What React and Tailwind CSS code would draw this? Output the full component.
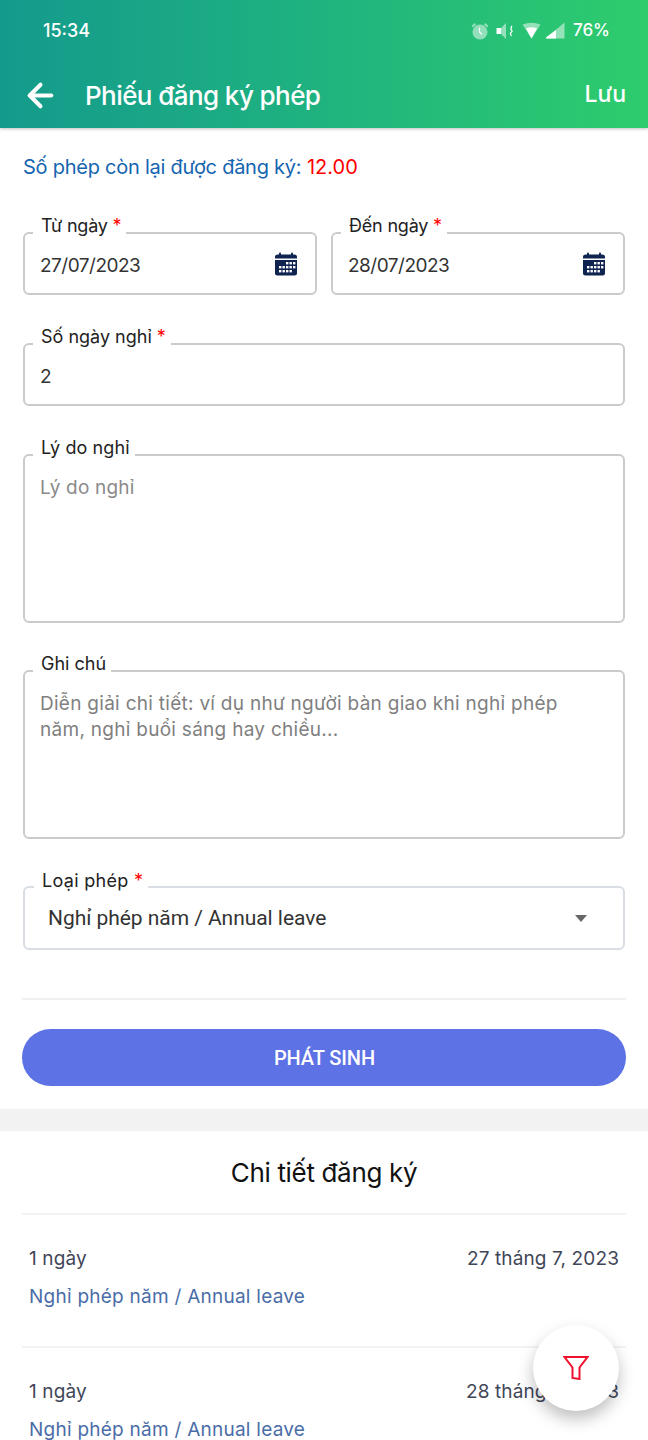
import { ArrowLeft } from "lucide-react";

const inter = "font-['Inter','Noto_Sans',sans-serif]";

function CalendarIcon() {
  return (
    <svg width="24" height="24" viewBox="0 0 24 24" className="mt-[1px] shrink-0">
      <rect x="5" y="0.5" width="2" height="4" rx="1" fill="#0f2350" />
      <rect x="17" y="0.5" width="2" height="4" rx="1" fill="#0f2350" />
      <path d="M3.5 2.5h17A2.5 2.5 0 0 1 23 5v1.5H1V5a2.5 2.5 0 0 1 2.5-2.5z" fill="#0f2350" />
      <path d="M1 8h22v13a2.500 2.500 0 0 1-2.500 2.500h-17A2.500 2.500 0 0 1 1 21z" fill="#0f2350" />
      {[[12, 10], [15.5, 10], [19, 10], [5, 14], [8.500, 14], [12, 14], [15.5, 14], [19, 14], [5, 18], [8.500, 18], [12, 18], [15.5, 18]].map(([x, y]) => (
        <rect key={`${x}-${y}`} x={x} y={y} width="2.400" height="2.400" fill="#fff" />
      ))}
    </svg>
  );
}

function StatusIcons() {
  return (
    <div className="flex items-center">
      <svg width="18" height="18" viewBox="0 0 18 18" fill="#fff" fillOpacity="0.5">
        <circle cx="9" cy="10" r="7.500" />
        <path d="M0.500 4 3.500 1l1.500 1.500-3 3zM17.500 4l-3-3-1.500 1.500 3 3z" />
        <path d="M8.500 5.500v4.500l2.500 2.500" fill="none" stroke="#fff" strokeOpacity="0.9" strokeWidth="1.200" />
      </svg>
      <svg width="18" height="18" viewBox="0 0 18 18" fill="#fff" className="ml-[7px]">
        <path d="M0.500 6h4.500v6H0.500z" />
        <path d="M5 6 10 1v16l-5-5z" fillOpacity="0.5" />
        <path d="M15 4c2 1 -1 2 0 3.500s2 1 0 3 1 2.500 0 3.500" fill="none" stroke="#fff" strokeWidth="1.300" />
      </svg>
      <svg width="19" height="17" viewBox="0 0 19 17" fill="#fff" className="ml-[8px]">
        <path d="M0.500 2.500Q9.500-1 18.500 2.500L9.500 16.500z" fillOpacity="0.5" />
        <path d="M4 6.500Q9.500 4 15 6.500L9.500 16.500z" />
      </svg>
      <svg width="20" height="17" viewBox="0 0 20 17" fill="#fff" className="ml-[4px]">
        <path d="M19.500 0.500V16.500H0.500z" fillOpacity="0.5" />
        <path d="M11 8v8.500H1.500q-1-.5 0-1.500z" />
      </svg>
      <span className={`${inter} ml-[8px] text-[17px] font-medium leading-none text-white`}>76%</span>
    </div>
  );
}

function Field({ label, required, children, className = "", labelClass = "left-[8px] top-[-21px]", borderClass = "border-[#cbcbcb]" }) {
  return (
    <div className={`relative rounded-[6px] border-2 ${borderClass} ${className}`}>
      <span className={`${inter} absolute ${labelClass} bg-white pl-[8px] pr-[5px] text-[18px] leading-[26px] text-[#222]`}>
        {label}
        {required && <span className="text-[#f00]"> *</span>}
      </span>
      {children}
    </div>
  );
}

function DetailRow({ date }) {
  return (
    <div className={`${inter} h-[133px] border-t-2 border-[#f2f2f2] px-[7px] pt-[31px]`}>
      <div className="flex justify-between text-[19px] leading-[26px] tracking-[0.12px] text-[#3f4658]">
        <span>1 ngày</span>
        <span>{date}</span>
      </div>
      <p className="mt-[12px] text-[19px] leading-[26px] tracking-[0.25px] text-[#4a6da7]">Nghỉ phép năm / Annual leave</p>
    </div>
  );
}

export default function App() {
  return (
    <div className="relative h-[1440px] w-[648px] overflow-hidden bg-white">
      {/* header */}
      <header className="h-[128px] bg-gradient-to-r from-[#149a8c] to-[#2ecc6c] shadow-[0_1px_3px_rgba(0,0,0,0.25)]">
        <div className="flex h-[61px] items-center justify-between pl-[43px] pr-[38px]">
          <span className={`${inter} text-[18px] font-medium text-white`}>15:34</span>
          <StatusIcons />
        </div>
        <div className="mt-[16px] flex items-center justify-between pl-[22px] pr-[22px]">
          <div className="flex items-center gap-[26px]">
            <ArrowLeft size={37} strokeWidth={2.600} color="#fff" />
            <h1 className={`${inter} text-[26px] font-medium leading-[36px] tracking-[-0.58px] text-white`}>Phiếu đăng ký phép</h1>
          </div>
          <span className={`${inter} pb-[4px] text-[23px] font-medium leading-[32px] text-white`}>Lưu</span>
        </div>
      </header>

      {/* form */}
      <main className="px-[22px]">
        <p className={`${inter} mt-[25px] pl-[1px] text-[20px] leading-[28px] text-[#1565b0]`}>
          <span className="tracking-[-0.25px]">Số phép còn lại được đăng ký:</span> <span className="text-[#f00]">12.00</span>
        </p>

        <div className="mt-[51px] flex gap-[14px] px-[1px]">
          <Field label="Từ ngày" required labelClass="left-[8px] top-[-21px] tracking-[-0.2px]" className="flex h-[63px] w-[294px] items-center justify-between pl-[15px] pr-[17px]">
            <span className={`${inter} pt-[6px] text-[19px] tracking-[-0.5px] text-[#333]`}>27/07/2023</span>
            <CalendarIcon />
          </Field>
          <Field label="Đến ngày" required labelClass="left-[8px] top-[-21px] tracking-[-0.2px]" className="flex h-[63px] w-[294px] items-center justify-between pl-[15px] pr-[17px]">
            <span className={`${inter} pt-[6px] text-[19px] tracking-[-0.5px] text-[#333]`}>28/07/2023</span>
            <CalendarIcon />
          </Field>
        </div>

        <Field label="Số ngày nghỉ" required labelClass="left-[8px] top-[-21px]" className="mx-[1px] mt-[48px] flex h-[63px] items-center pl-[15px]">
          <span className={`${inter} pt-[6px] text-[19px] text-[#333]`}>2</span>
        </Field>

        <Field label="Lý do nghỉ" labelClass="left-[8px] top-[-21px] tracking-[0.1px]" className="mx-[1px] mt-[48px] h-[169px] px-[15px] pt-[19px]">
          <p className={`${inter} text-[19px] leading-[26px] tracking-[0.2px] text-[#8a8a8a]`}>Lý do nghỉ</p>
        </Field>

        <Field label="Ghi chú" className="mx-[1px] mt-[47px] h-[169px] pl-[15px] pr-[24px] pt-[19px]">
          <p className={`${inter} text-[19px] leading-[26px] tracking-[0.28px] text-[#808080]`}>
            Diễn giải chi tiết: ví dụ như người bàn giao khi nghỉ phép năm, nghỉ buổi sáng hay chiều...
          </p>
        </Field>

        <Field label="Loại phép" required labelClass="left-[9px] top-[-20px] tracking-[0.3px]" borderClass="border-[#d9dee5]" className="mx-[1px] mt-[47px] flex h-[64px] items-center justify-between pl-[23px] pr-[36px]">
          <span className="pt-[1px] font-['Roboto',sans-serif] text-[21px] tracking-[-0.05px] text-[#333]">Nghỉ phép năm / Annual leave</span>
          <span className="h-0 w-0 border-x-[6px] border-t-[7px] border-x-transparent border-t-[#666]" />
        </Field>

        <div className="mt-[48px] h-[2px] bg-[#f0f0f0]" />

        <button className="mt-[29px] flex h-[57px] w-full items-center justify-center rounded-full bg-[#5d72e4] pl-[1px] font-['Roboto',sans-serif] text-[20px] font-medium tracking-[-0.1px] text-white">
          PHÁT SINH
        </button>
      </main>

      <div className="mt-[23px] h-[22px] bg-[#f2f2f2]" />

      {/* details */}
      <section className="px-[22px]">
        <h2 className={`${inter} flex h-[82px] items-center justify-center text-[26px] tracking-[-0.33px] text-[#111]`}>Chi tiết đăng ký</h2>
        <DetailRow date="27 tháng 7, 2023" />
        <DetailRow date="28 tháng 7, 2023" />
      </section>

      <button className="absolute left-[533px] top-[1325px] flex h-[86px] w-[86px] items-center justify-center rounded-full bg-white shadow-[0_8px_16px_rgba(0,0,0,0.25)]">
        <svg width="26" height="24" viewBox="0 0 26 24" fill="none" stroke="#f0102e" strokeWidth="2">
          <path d="M1.500 1h23L16.500 11.500V23l-7-1V11.500z" />
        </svg>
      </button>
    </div>
  );
}
